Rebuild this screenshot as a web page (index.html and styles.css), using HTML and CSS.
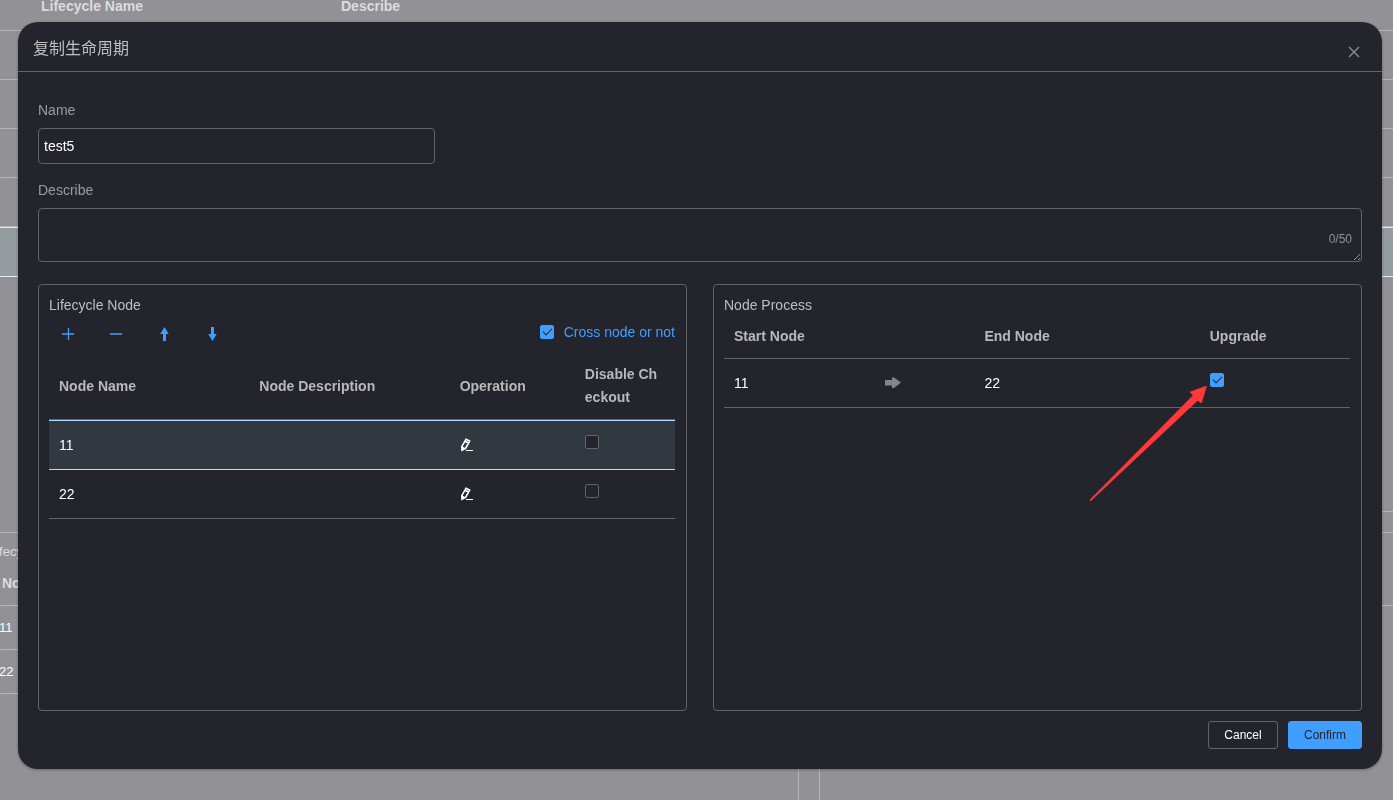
FILE: index.html
```html
<!DOCTYPE html>
<html lang="en">
<head>
<meta charset="utf-8">
<title>Lifecycle</title>
<link rel="stylesheet" href="styles.css">
</head>
<body>
<main class="page">
  <table class="page-list">
    <thead><tr><th class="col-name">Lifecycle Name</th><th>Describe</th></tr></thead>
    <tbody>
      <tr><td></td><td></td></tr>
      <tr><td></td><td></td></tr>
      <tr><td></td><td></td></tr>
      <tr><td></td><td></td></tr>
      <tr class="current"><td></td><td></td></tr>
    </tbody>
  </table>
  <div class="page-divider"></div>
  <div class="page-panels">
    <section class="page-panel">
      <h2 class="page-title">Lifecycle Node</h2>
      <table class="page-nodes">
        <thead><tr><th>Node Name</th></tr></thead>
        <tbody><tr><td>11</td></tr><tr><td>22</td></tr></tbody>
      </table>
    </section>
    <section class="page-panel">
      <h2 class="page-title"></h2>
      <table class="page-nodes"><thead><tr><th></th></tr></thead></table>
    </section>
  </div>
</main>

<div class="dialog" role="dialog" aria-labelledby="dialog-title">
  <header class="dialog-header">
    <h1 class="dialog-title" id="dialog-title" lang="zh-CN">复制生命周期</h1>
    <button class="icon-button close" type="button" aria-label="Close">
      <svg width="12" height="12" viewBox="0 0 12 12"><path d="M1 1l10 10M11 1L1 11" stroke="currentColor" stroke-width="1.2" fill="none"/></svg>
    </button>
  </header>
  <form class="dialog-body">
    <label class="label" for="name">Name</label>
    <input class="field name" id="name" type="text" value="test5">
    <label class="label describe-label" for="describe">Describe</label>
    <div class="describe-wrap">
      <textarea class="field describe" id="describe" maxlength="50"></textarea>
      <span class="count">0/50</span>
    </div>

    <div class="panels">
      <section class="panel">
        <h2 class="panel-title">Lifecycle Node</h2>
        <div class="toolbar">
          <div class="tools">
            <button class="icon-button" type="button" aria-label="Add"><svg width="14" height="14" viewBox="0 0 14 14"><path d="M1 7h12M7.500 1v12" stroke="currentColor" stroke-width="1.300" fill="none"/></svg></button>
            <button class="icon-button" type="button" aria-label="Remove"><svg width="14" height="14" viewBox="0 0 14 14"><path d="M1 7h12" stroke="currentColor" stroke-width="1.500" fill="none"/></svg></button>
            <button class="icon-button" type="button" aria-label="Move up"><svg width="14" height="14" viewBox="0 0 14 14"><path d="M7.500 0L11.700 7H9V14H6V7H3.200z" fill="currentColor"/></svg></button>
            <button class="icon-button" type="button" aria-label="Move down"><svg width="14" height="14" viewBox="0 0 14 14"><path d="M7.500 14L11.700 7H9V0H6V7H3.200z" fill="currentColor"/></svg></button>
          </div>
          <label class="cross"><input class="check" type="checkbox" checked>Cross node or not</label>
        </div>
        <table class="grid nodes">
          <thead><tr><th class="w32">Node Name</th><th class="w32">Node Description</th><th class="w20">Operation</th><th class="w16">Disable Checkout</th></tr></thead>
          <tbody>
            <tr class="selected">
              <td>11</td><td></td>
              <td><button class="icon-button edit" type="button" aria-label="Edit 11"><svg width="14" height="14" viewBox="0 0 14 14"><path d="M6 1.200L9.600 3 5.600 10.300 2 12.200 1.800 8.700zM5 3.200l3.600 1.800M2 9.200l2.600 1.400" fill="none" stroke="currentColor" stroke-width="1.600"/><path d="M6 12.500h7" stroke="currentColor" stroke-width="1"/></svg></button></td>
              <td><input class="check" type="checkbox" aria-label="Disable checkout for 11"></td>
            </tr>
            <tr>
              <td>22</td><td></td>
              <td><button class="icon-button edit" type="button" aria-label="Edit 22"><svg width="14" height="14" viewBox="0 0 14 14"><path d="M6 1.200L9.600 3 5.600 10.300 2 12.200 1.800 8.700zM5 3.200l3.600 1.800M2 9.200l2.600 1.400" fill="none" stroke="currentColor" stroke-width="1.600"/><path d="M6 12.500h7" stroke="currentColor" stroke-width="1"/></svg></button></td>
              <td><input class="check" type="checkbox" aria-label="Disable checkout for 22"></td>
            </tr>
          </tbody>
        </table>
      </section>

      <section class="panel">
        <h2 class="panel-title">Node Process</h2>
        <table class="grid process">
          <thead><tr><th class="w24">Start Node</th><th class="w16"></th><th class="w36">End Node</th><th class="w24">Upgrade</th></tr></thead>
          <tbody>
            <tr>
              <td>11</td>
              <td><svg class="next" width="18" height="12" viewBox="0 0 18 12"><path d="M1 3h7V0.500h2l7 5-7 5.500H8V8.500H1z" fill="currentColor"/></svg></td>
              <td>22</td>
              <td><span class="marked"><input class="check" type="checkbox" aria-label="Upgrade" checked><svg class="pointer" width="118" height="116" viewBox="0 0 118 116"><path d="M117.500 0L101 6l3 3.500L.8 114l.8 1L108.500 14.500l4 2.500z" fill="#fd3a3a" stroke="#fd3a3a" stroke-width=".6"/></svg></span></td>
            </tr>
          </tbody>
        </table>
      </section>
    </div>

    <footer class="actions">
      <button class="button" type="button">Cancel</button>
      <button class="button primary" type="submit">Confirm</button>
    </footer>
  </form>
</div>
</body>
</html>
```
FILE: styles.css
```css
* { box-sizing: border-box; }
body {
  margin: 0;
  height: 100vh;
  overflow: hidden;
  background: #929195;
  color: #fff;
  font: 14px/23px "Liberation Sans", "Noto Sans CJK SC", sans-serif;
}
h1, h2 { margin: 0; font-weight: 400; }
table { border-collapse: separate; border-spacing: 0; table-layout: fixed; width: 100%; }
th { text-align: left; }

/* Page behind the dialog */
.page { height: 100vh; display: flex; flex-direction: column; overflow: hidden; }
.page-list th { height: 31px; padding: 0 0 18px 41px; line-height: 12px; color: #dcdcde; border-bottom: 1px solid #b6b5b6; }
.page-list th + th { padding-left: 0; }
.page-list .col-name { width: 341px; }
.page-list td { height: 49px; padding: 0; border-bottom: 1px solid #b6b5b6; }
.page-list .current td { height: 50px; background: #949c9f; border-top: 1px solid #dcecf8; border-bottom-color: #dcecf8; }
.page-divider { margin: 234px 0 20px 50%; border-bottom: 1px solid #b6b5b6; }
.page-panels { flex: 1; display: grid; grid-template-columns: 823px 1fr; gap: 20px; margin: 0 -20px 0 -24px; }
.page-panel { border: 1px solid #b6b5b6; border-bottom: 0; padding: 8px 10px 0 8px; }
.page-title { height: 21px; padding-left: 4px; font-size: 13px; line-height: 21px; color: #dcdcde; }
.page-nodes th, .page-nodes td { height: 44px; padding: 0 0 0 14px; border-bottom: 1px solid #b6b5b6; }
.page-nodes th { padding-left: 17px; color: #dcdcde; }
.page-nodes td { font-size: 13px; }

/* Dialog */
.dialog {
  position: fixed;
  inset: 22px 11px 31px 18px;
  display: flex;
  flex-direction: column;
  border-radius: 20px;
  background: #24242d;
  box-shadow: 0 1px 3px rgba(0, 0, 0, .3);
}
.dialog-header { display: flex; justify-content: space-between; height: 50px; padding: 15px 22px 0 15px; border-bottom: 1px solid #636466; }
.dialog-title { font-size: 16px; line-height: 24px; color: #bfbfc1; }
.icon-button { display: block; padding: 0; border: 0; background: none; color: #409eff; }
.icon-button svg, .next, .pointer { display: block; }
.close { height: 30px; color: #909399; }
.dialog-body { flex: 1; display: flex; flex-direction: column; padding: 20px; }
.label { line-height: 36px; color: #9c9c9e; }
.describe-label { margin-top: 8px; }
.field { border: 1px solid #636466; border-radius: 4px; background: transparent; color: #fff; font: inherit; outline: 0; }
.name { width: 30%; height: 36px; padding: 0 5px; }
.describe-wrap { position: relative; height: 54px; }
.describe { display: block; width: 100%; height: 54px; padding: 5px; resize: vertical; }
.count { position: absolute; right: 10px; bottom: 11px; font-size: 12px; line-height: 24px; color: #909399; }

.panels { flex: 1; display: grid; grid-template-columns: 1fr 1fr; gap: 26px; margin-top: 22px; }
.panel { min-width: 0; padding: 12px 11px 0 10px; border: 1px solid #636466; border-radius: 4px; }
.panel-title { font-size: 14px; line-height: 16px; color: #bfbfc1; }
.toolbar { display: flex; justify-content: space-between; height: 37px; }
.tools { display: flex; gap: 34px; padding: 14px 0 0 12px; }
.tools .icon-button { height: 14px; }
.cross { display: flex; align-items: center; gap: 10px; height: 38px; color: #409eff; }

.check {
  appearance: none;
  display: block;
  width: 14px;
  height: 14px;
  margin: 0;
  border: 1px solid #636466;
  border-radius: 2px;
  background: #24242d;
}
.check:checked { border-color: #409eff; background: #409eff; }
.check:checked::after {
  content: "";
  display: block;
  width: 8px;
  height: 4px;
  margin: 2px;
  border: solid #24242d;
  border-width: 0 0 1px 1px;
  transform: rotate(-45deg);
}

.grid th { padding: 12px 10px 10px; color: #b9b8bb; word-break: break-all; border-bottom: 1px solid #636466; }
.nodes th { padding-top: 13px; }
.nodes th:last-child { padding-right: 14px; }
.grid td { height: 49px; padding: 0 10px; border-bottom: 1px solid #636466; }
.grid .selected td { height: 50px; background: #313840; border-top: 1px solid #b0dcff; border-bottom-color: #b0dcff; }
.grid .check { margin: 0 0 6px; }
.edit { color: #fff; }
.next { color: #858585; }
.w16 { width: 16%; }
.w20 { width: 20%; }
.w24 { width: 24%; }
.w32 { width: 32%; }
.w36 { width: 36%; }
.marked { position: relative; display: block; width: 14px; }
.pointer { position: absolute; top: 13px; right: 17px; pointer-events: none; }

.actions { display: flex; justify-content: flex-end; gap: 10px; margin-top: 10px; }
.button { min-width: 70px; height: 28px; padding: 0 15px; border: 1px solid #636466; border-radius: 3px; background: transparent; color: #fff; font: 12px/16px "Liberation Sans", sans-serif; }
.primary { border-color: #409eff; background: #409eff; color: #24242d; }
```
